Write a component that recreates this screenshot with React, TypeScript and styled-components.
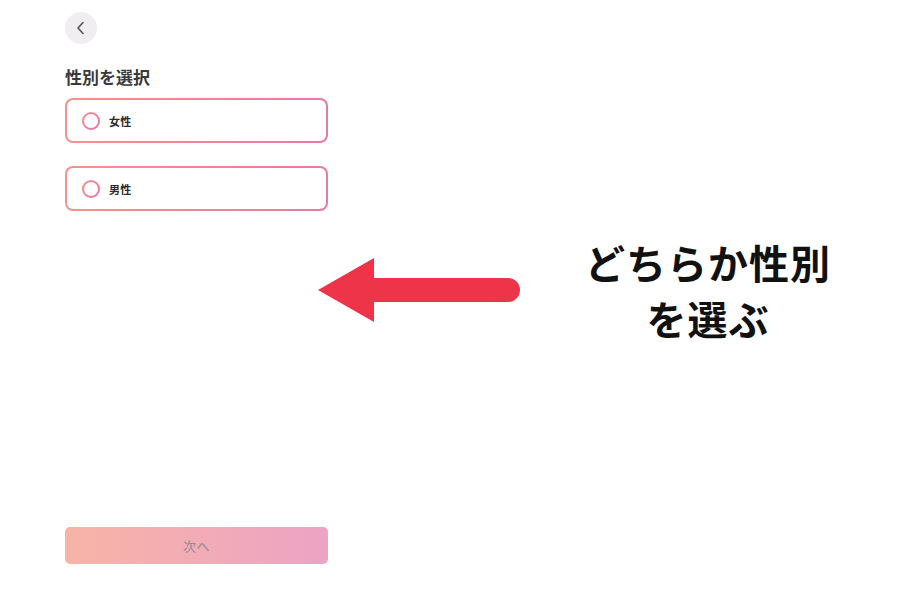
import React from "react";
import styled, { createGlobalStyle } from "styled-components";

const Global = createGlobalStyle`
  html, body { margin: 0; padding: 0; background: #ffffff; }
  body { font-family: "Noto Sans CJK JP", "Noto Sans", sans-serif; }
  * { box-sizing: border-box; }
`;

const Page = styled.div`
  display: flex;
  flex-direction: row;
  align-items: flex-start;
  padding-left: 65px;
  height: 596px;
  overflow: hidden;
`;

const Panel = styled.div`
  width: 263px;
  height: 596px;
  display: flex;
  flex-direction: column;
  padding: 12px 0 32px;
`;

const BackButton = styled.button`
  width: 32px;
  height: 32px;
  border-radius: 50%;
  border: none;
  background: #f0eef0;
  display: flex;
  align-items: center;
  justify-content: center;
  padding: 0;
  cursor: pointer;
`;

const Heading = styled.h2`
  margin: 21px 0 0;
  font-size: 17px;
  line-height: 24px;
  font-weight: 700;
  color: #3a3a3a;
`;

const Options = styled.div`
  display: flex;
  flex-direction: column;
  gap: 23px;
  margin-top: 9px;
`;

const Option = styled.label`
  height: 45px;
  display: flex;
  align-items: center;
  gap: 9px;
  padding-left: 15px;
  border: 2px solid transparent;
  border-radius: 8px;
  background: linear-gradient(#ffffff, #ffffff) padding-box,
    linear-gradient(90deg, #f7928a, #eb78a3) border-box;
  cursor: pointer;
`;

const Radio = styled.span`
  width: 18px;
  height: 18px;
  border-radius: 50%;
  border: 2px solid transparent;
  background: linear-gradient(#ffffff, #ffffff) padding-box,
    linear-gradient(135deg, #f7928a, #e874a8) border-box;
  flex: none;
`;

const OptionText = styled.span`
  font-size: 11px;
  font-weight: 700;
  color: #2a2a2a;
  letter-spacing: 0.2px;
`;

const NextButton = styled.button`
  margin-top: auto;
  height: 37px;
  width: 100%;
  border: none;
  border-radius: 5px;
  background: linear-gradient(90deg, #f8b4a6, #eca3c5);
  color: #8f8997;
  font-family: "Noto Sans CJK JP", sans-serif;
  font-size: 13px;
  font-weight: 400;
  letter-spacing: 0.5px;
`;

const Annotation = styled.div`
  display: flex;
  flex-direction: row;
  align-items: center;
  margin-top: 234px;
  margin-left: -10px;
`;

const Callout = styled.div`
  margin-left: 62px;
  display: flex;
  flex-direction: column;
  align-items: center;
  width: 250px;
  font-family: "Noto Sans CJK JP", sans-serif;
  font-weight: 700;
  font-size: 40px;
  line-height: 56px;
  color: #111111;
  letter-spacing: 1px;
`;

export default function App() {
  return (
    <>
      <Global />
      <Page>
        <Panel>
          <BackButton aria-label="戻る">
            <svg width="16" height="16" viewBox="0 0 16 16" fill="none">
              <path d="M10 2.5 L5 8 L10 13.5" stroke="#555" strokeWidth="1.6" strokeLinecap="round" strokeLinejoin="round" />
            </svg>
          </BackButton>
          <Heading>性別を選択</Heading>
          <Options>
            <Option>
              <Radio />
              <OptionText>女性</OptionText>
            </Option>
            <Option>
              <Radio />
              <OptionText>男性</OptionText>
            </Option>
          </Options>
          <NextButton>次へ</NextButton>
        </Panel>
        <Annotation>
          <svg width="203" height="64" viewBox="0 0 203 64">
            <path d="M0 32 L56 0 L56 20 L190 20 A12 12 0 0 1 190 44 L56 44 L56 64 Z" fill="#ee3448" />
          </svg>
          <Callout>
            <span>どちらか性別</span>
            <span>を選ぶ</span>
          </Callout>
        </Annotation>
      </Page>
    </>
  );
}
